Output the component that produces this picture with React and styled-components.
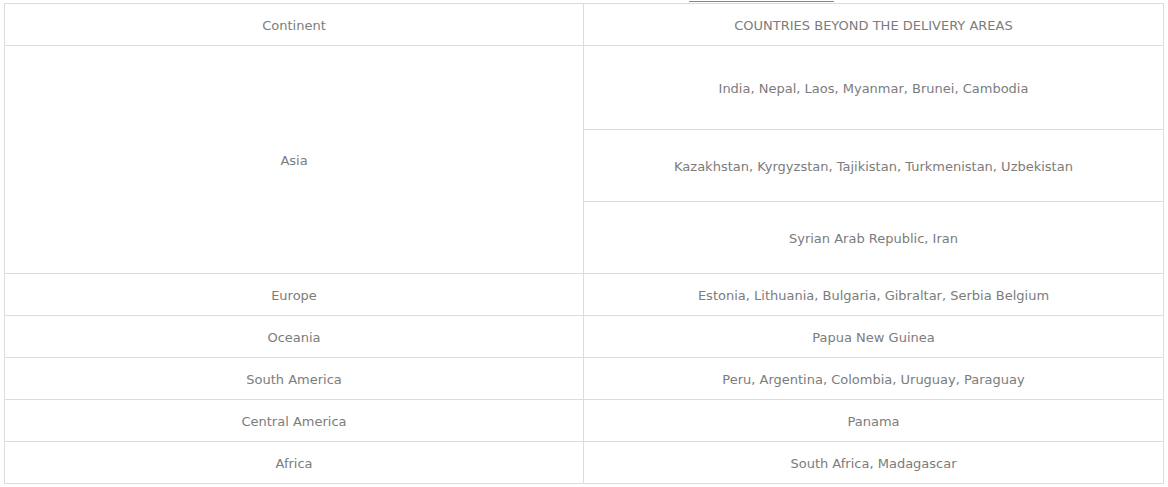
import React from 'react'
import styled, { createGlobalStyle } from 'styled-components'

const GlobalStyle = createGlobalStyle`
	html, body {
		margin: 0;
		padding: 0;
		background: #fff;
	}
	body {
		font-family: 'DejaVu Sans', 'Liberation Sans', sans-serif;
	}
`

export const Page = styled.div`
	display: flex;
	flex-direction: column;
	padding: 0px 4px;
`
export const IntroStrip = styled.div`
	height: 3px;
	display: flex;
	align-items: flex-start;
`
export const IntroLink = styled.span`
	margin-left: ${props => props.offset || 0}px;
	width: ${props => props.width || 100}px;
	border-top: 1px solid #888;
	margin-top: 1px;
`
export const Table = styled.table`
	width: 100%;
	border-collapse: collapse;
	table-layout: fixed;
	border: 1px solid #dcdcdc;
`
export const Cell = styled.td`
	border: 1px solid #dcdcdc;
	text-align: center;
	vertical-align: middle;
	color: #7c7c7c;
	font-size: 13px;
	height: ${props => props.height || 41}px;
	padding: 2px 8px 0px 8px;
	text-transform: ${props => (props.caps ? 'uppercase' : 'none')};
	width: ${props => props.width || 'auto'};
	box-sizing: border-box;
`

const asia = [
	{ text: 'India, Nepal, Laos, Myanmar, Brunei, Cambodia', height: 84 },
	{ text: 'Kazakhstan, Kyrgyzstan, Tajikistan, Turkmenistan, Uzbekistan', height: 72 },
	{ text: 'Syrian Arab Republic, Iran', height: 72 }
]

const rows = [
	['Europe', 'Estonia, Lithuania, Bulgaria, Gibraltar, Serbia Belgium'],
	['Oceania', 'Papua New Guinea'],
	['South America', 'Peru, Argentina, Colombia, Uruguay, Paraguay'],
	['Central America', 'Panama'],
	['Africa', 'South Africa, Madagascar']
]

const App = () => {
	return (
		<Page>
			<GlobalStyle />
			<IntroStrip>
				<IntroLink offset={685} width={145} />
			</IntroStrip>
			<Table>
				<tbody>
					<tr>
						<Cell width="579px" height={42}>Continent</Cell>
						<Cell caps height={42}>Countries beyond the delivery areas</Cell>
					</tr>
					{asia.map((item, i) => (
						<tr key={item.text}>
							{i === 0 && <Cell rowSpan={3}>Asia</Cell>}
							<Cell height={item.height}>{item.text}</Cell>
						</tr>
					))}
					{rows.map(([continent, countries]) => (
						<tr key={continent}>
							<Cell height={42}>{continent}</Cell>
							<Cell height={42}>{countries}</Cell>
						</tr>
					))}
				</tbody>
			</Table>
		</Page>
	)
}

export default App
